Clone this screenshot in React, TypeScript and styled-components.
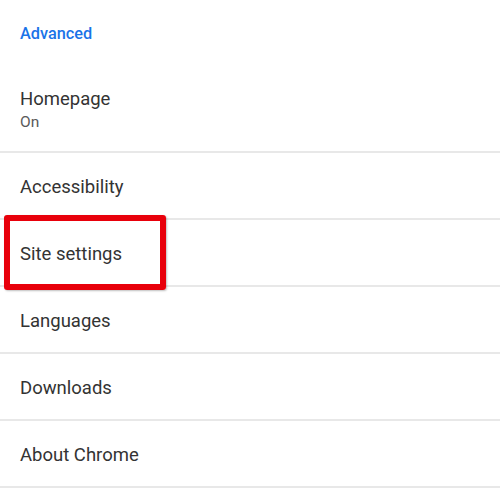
import React from "react";
import styled, { createGlobalStyle } from "styled-components";

const Global = createGlobalStyle`
  html, body { margin: 0; padding: 0; background: #fff; }
  body { font-family: Roboto, "Noto Sans", "Liberation Sans", sans-serif; }
`;

const Page = styled.div`
  width: 500px;
  height: 488px;
  overflow: hidden;
  display: flex;
  flex-direction: column;
  background: #fff;
`;

const Header = styled.div`
  height: 67px;
  display: flex;
  align-items: center;
  padding-left: 20px;
  box-sizing: border-box;
  color: #1a73e8;
  font-size: 16.3px;
  font-weight: 500;
`;

const Item = styled.div<{ $tall?: boolean }>`
  position: relative;
  height: ${(p) => (p.$tall ? 86 : 67)}px;
  box-sizing: border-box;
  border-bottom: 2px solid #e8e8e8;
  display: flex;
  flex-direction: column;
  justify-content: center;
  padding: ${(p) => (p.$tall ? "2px 0 0 20px" : "3px 0 0 20px")};
`;

const Title = styled.div`
  font-size: 18.5px;
  color: #333;
  line-height: 23px;
`;

const Sub = styled.div`
  font-size: 15.5px;
  color: #5a5a5a;
  line-height: 21px;
  margin-top: 1px;
`;

const Highlight = styled.div`
  position: absolute;
  left: 4px;
  top: -5px;
  width: 162px;
  height: 75px;
  box-sizing: border-box;
  border: 6px solid #e8000b;
  border-radius: 3px;
  box-shadow: 1px 1px 2px rgba(0, 0, 0, 0.25);
  pointer-events: none;
`;

const items = ["Accessibility", "Site settings", "Languages", "Downloads", "About Chrome"];

export default function App() {
  return (
    <Page>
      <Global />
      <Header>Advanced</Header>
      <Item $tall>
        <Title>Homepage</Title>
        <Sub>On</Sub>
      </Item>
      {items.map((t) => (
        <Item key={t}>
          <Title>{t}</Title>
          {t === "Site settings" && <Highlight />}
        </Item>
      ))}
    </Page>
  );
}
